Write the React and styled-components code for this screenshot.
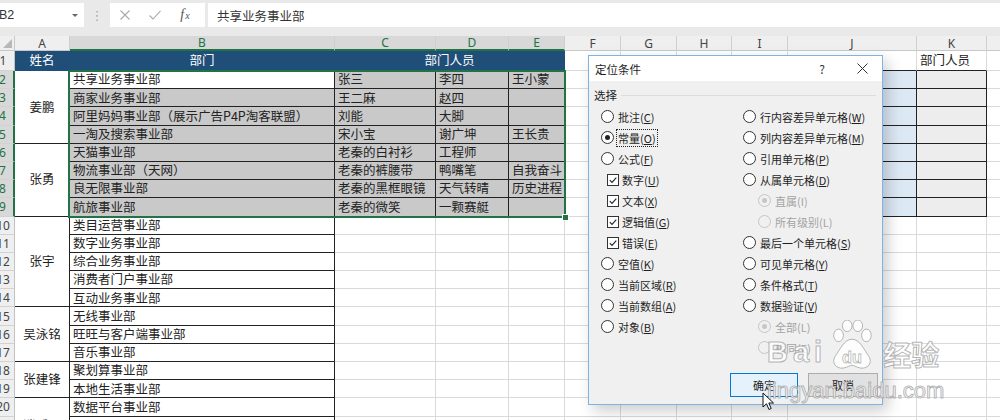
import React from "react";
import styled, { createGlobalStyle } from "styled-components";

const GlobalStyle = createGlobalStyle`
  body {
    margin: 0;
    overflow: hidden;
    background: #fff;
    font-family: "Noto Sans CJK SC", "Noto Sans", sans-serif;
  }
`;

const NAVY = "#1f4e78";
const GREEN = "#217346";
const GRID = "#dadada";
const SEL_FILL = "#c9c9c9";

const COLS = ["A", "B", "C", "D", "E", "F", "G", "H", "I", "J", "K", "L"];
const WIDTHS = [55, 265, 101, 73, 56, 56, 56, 55, 56, 129, 70, 73];

const depts = {
  2: "共享业务事业部",
  3: "商家业务事业部",
  4: "阿里妈妈事业部（展示广告P4P淘客联盟）",
  5: "一淘及搜索事业部",
  6: "天猫事业部",
  7: "物流事业部（天网）",
  8: "良无限事业部",
  9: "航旅事业部",
  10: "类目运营事业部",
  11: "数字业务事业部",
  12: "综合业务事业部",
  13: "消费者门户事业部",
  14: "互动业务事业部",
  15: "无线事业部",
  16: "旺旺与客户端事业部",
  17: "音乐事业部",
  18: "聚划算事业部",
  19: "本地生活事业部",
  20: "数据平台事业部",
};

const people = {
  2: ["张三", "李四", "王小蒙"],
  3: ["王二麻", "赵四", ""],
  4: ["刘能", "大脚", ""],
  5: ["宋小宝", "谢广坤", "王长贵"],
  6: ["老秦的白衬衫", "工程师", ""],
  7: ["老秦的裤腰带", "鸭嘴笔", "自我奋斗"],
  8: ["老秦的黑框眼镜", "天气转晴", "历史进程"],
  9: ["老秦的微笑", "一颗赛艇", ""],
};

const groups = [
  { name: "姜鹏", from: 2, to: 5 },
  { name: "张勇", from: 6, to: 9 },
  { name: "张宇", from: 10, to: 14 },
  { name: "吴泳铭", from: 15, to: 17 },
  { name: "张建锋", from: 18, to: 19 },
  { name: "逍遥子", from: 20, to: 22 },
];

const options = [
  [{ t: "批注", k: "C" }, { t: "行内容差异单元格", k: "W" }],
  [{ t: "常量", k: "O", on: true, focus: true }, { t: "列内容差异单元格", k: "M" }],
  [{ t: "公式", k: "F" }, { t: "引用单元格", k: "P" }],
  [{ t: "数字", k: "U", box: true }, { t: "从属单元格", k: "D" }],
  [{ t: "文本", k: "X", box: true }, { t: "直属", k: "I", off: true, on: true, sub: true }],
  [{ t: "逻辑值", k: "G", box: true }, { t: "所有级别", k: "L", off: true, sub: true }],
  [{ t: "错误", k: "E", box: true }, { t: "最后一个单元格", k: "S" }],
  [{ t: "空值", k: "K" }, { t: "可见单元格", k: "Y" }],
  [{ t: "当前区域", k: "R" }, { t: "条件格式", k: "T" }],
  [{ t: "当前数组", k: "A" }, { t: "数据验证", k: "V" }],
  [{ t: "对象", k: "B" }, { t: "全部", k: "L", off: true, on: true, sub: true }],
  [null, { t: "相同", k: "E", off: true, sub: true }],
];

const Page = styled.div`
  position: relative;
  width: 1000px;
  height: 420px;
  overflow: hidden;
  background: #fff;
`;

/* ---------- formula bar ---------- */

const FormulaBar = styled.div`
  height: 36px;
  box-sizing: border-box;
  padding: 3px 0 9px;
  background: #e9e9e9;
  display: flex;
`;

const NameBox = styled.div`
  width: 84px;
  background: #fff;
  display: flex;
  align-items: center;
  justify-content: space-between;
  padding-right: 6px;
  box-sizing: border-box;
  font: 12.5px "Liberation Sans", sans-serif;
  color: #333;
`;

const NameText = styled.span`
  margin-left: -1px;
`;

const Caret = styled.span`
  width: 0;
  height: 0;
  border-left: 3px solid transparent;
  border-right: 3px solid transparent;
  border-top: 3px solid #666;
`;

const Grip = styled.div`
  width: 26px;
  display: flex;
  align-items: center;
  justify-content: center;
  color: #a8a8a8;
  font: 13px "DejaVu Sans", sans-serif;
`;

const ToolBox = styled.div`
  width: 95px;
  background: #fff;
  display: flex;
`;

const ToolSlot = styled.div`
  width: 30px;
  display: flex;
  align-items: center;
  justify-content: center;
`;

const Fx = styled.span`
  font: italic 14px "Liberation Serif", serif;
  color: #555;
  small {
    font-size: 10px;
    margin-left: 1px;
  }
`;

const FormulaInput = styled.div`
  flex: 1;
  margin-left: 3px;
  background: #fff;
  display: flex;
  align-items: center;
  padding-left: 9px;
  font-size: 12.5px;
  color: #333;
`;

/* ---------- sheet ---------- */

const Sheet = styled.div`
  display: grid;
  grid-template-columns: 23px ${WIDTHS.map((w) => `${w}px`).join(" ")};
  grid-template-rows: 15px 20px repeat(21, 18.2px);
  margin-left: -8px;
`;

const Corner = styled.div`
  grid-row: 1;
  grid-column: 1;
  background: #efefef;
  border-right: 1px solid #c8c8c8;
  border-bottom: 1px solid #c8c8c8;
  box-sizing: border-box;
  display: flex;
  align-items: flex-end;
  justify-content: flex-end;
  padding: 0 2px 2px 0;
  &::after {
    content: "";
    border-left: 9px solid transparent;
    border-bottom: 9px solid #b8b8b8;
  }
`;

const ColHead = styled.div`
  grid-row: 1;
  grid-column: ${(p) => p.$col};
  background: ${(p) => (p.$sel ? "#d8d8d8" : "#efefef")};
  color: ${(p) => (p.$sel ? GREEN : "#444")};
  border-right: 1px solid #cfcfcf;
  border-bottom: ${(p) => (p.$sel ? `2px solid ${GREEN}` : "1px solid #c8c8c8")};
  box-sizing: border-box;
  display: flex;
  align-items: center;
  justify-content: center;
  font: 12px "Noto Sans", sans-serif;
`;

const RowHead = styled.div`
  grid-row: ${(p) => p.$row};
  grid-column: 1;
  background: ${(p) => (p.$sel ? "#d8d8d8" : "#efefef")};
  color: ${(p) => (p.$sel ? GREEN : "#444")};
  border-bottom: 1px solid #d2d2d2;
  border-right: ${(p) => (p.$sel ? `2px solid ${GREEN}` : "1px solid #c2c2c2")};
  box-sizing: border-box;
  display: flex;
  align-items: center;
  justify-content: center;
  font: 12px "Noto Sans", sans-serif;
`;

const Cell = styled.div`
  grid-row: ${(p) => p.$row} / span ${(p) => p.$rs || 1};
  grid-column: ${(p) => p.$col} / span ${(p) => p.$cs || 1};
  box-sizing: border-box;
  border-right: 1px solid ${(p) => p.$br || GRID};
  border-bottom: 1px solid ${(p) => p.$bb || p.$br || GRID};
  background: ${(p) => p.$fill || "#fff"};
  color: ${(p) => p.$color || "#222"};
  font-size: 12.5px;
  line-height: 1;
  display: flex;
  align-items: center;
  justify-content: ${(p) => (p.$center ? "center" : "flex-start")};
  padding-left: ${(p) => (p.$center ? 0 : 3)}px;
  white-space: nowrap;
  overflow: hidden;
`;

const Selection = styled.div`
  grid-row: 3 / span 8;
  grid-column: 3 / span 4;
  margin: -1px -1px -1px -2px;
  border: 2px solid ${GREEN};
  position: relative;
  z-index: 2;
  pointer-events: none;
`;

const Handle = styled.span`
  position: absolute;
  right: -5px;
  bottom: -5px;
  width: 5px;
  height: 5px;
  background: ${GREEN};
  border: 1px solid #fff;
`;

/* ---------- dialog ---------- */

const Dialog = styled.div`
  position: absolute;
  left: 588px;
  top: 55px;
  width: 295px;
  height: 350px;
  box-sizing: border-box;
  border: 1px solid #7fb3e6;
  background: #f0f0f0;
  box-shadow: 5px 6px 14px rgba(0, 0, 0, 0.2);
  display: flex;
  flex-direction: column;
  font-size: 11px;
  color: #1e1e1e;
  z-index: 5;
`;

const TitleBar = styled.div`
  height: 25px;
  background: #fff;
  display: flex;
  align-items: center;
  padding-left: 6px;
  font-size: 11.5px;
`;

const TitleText = styled.span`
  flex: 1;
`;

const TitleButton = styled.span`
  width: 40px;
  display: flex;
  justify-content: center;
  font-size: 12px;
  color: #333;
`;

const GroupLabel = styled.div`
  height: 20px;
  margin-top: 4px;
  padding: 0 6px 0 5px;
  display: flex;
  align-items: center;
  gap: 4px;
  font-size: 11.5px;
  &::after {
    content: "";
    flex: 1;
    height: 1px;
    background: #dcdcdc;
  }
`;

const Options = styled.div`
  display: grid;
  grid-template-columns: 142px 1fr;
  grid-auto-rows: 21px;
  padding-left: 12px;
  margin-top: 1px;
`;

const Option = styled.div`
  display: flex;
  align-items: center;
  gap: ${(p) => (p.$box ? 2 : 3)}px;
  padding-left: ${(p) => p.$indent}px;
  color: ${(p) => (p.$off ? "#a3a3a3" : "#1e1e1e")};
  white-space: nowrap;
`;

const Radio = styled.span`
  width: 13px;
  height: 13px;
  box-sizing: border-box;
  border-radius: 50%;
  border: 1px solid ${(p) => (p.$off ? "#c6c6c6" : "#333")};
  background: ${(p) => (p.$off ? "#f0f0f0" : "#fff")};
  display: flex;
  align-items: center;
  justify-content: center;
  &::after {
    content: "";
    display: ${(p) => (p.$on ? "block" : "none")};
    width: 5px;
    height: 5px;
    border-radius: 50%;
    background: ${(p) => (p.$off ? "#c6c6c6" : "#222")};
  }
`;

const Box = styled.span`
  width: 12px;
  height: 12px;
  box-sizing: border-box;
  border: 1px solid #333;
  background: #fff;
  display: flex;
`;

const Label = styled.span`
  padding: 0 1px;
  outline: ${(p) => (p.$focus ? "1px dotted #222" : "none")};
  u {
    text-decoration-thickness: 1px;
    text-underline-offset: 1px;
  }
`;

const ButtonRow = styled.div`
  margin-top: auto;
  padding: 0 4px 7px 0;
  display: flex;
  justify-content: flex-end;
  gap: 10px;
`;

const Button = styled.div`
  width: ${(p) => p.$w}px;
  height: 24px;
  box-sizing: border-box;
  display: flex;
  align-items: center;
  justify-content: center;
  background: ${(p) => (p.$primary ? "#e5f1fb" : "#e1e1e1")};
  border: 1px solid ${(p) => (p.$primary ? "#0078d7" : "#adadad")};
  font-size: 11px;
`;

/* ---------- overlays ---------- */

const Watermark = styled.div`
  position: absolute;
  left: 767px;
  top: 320px;
  z-index: 8;
  pointer-events: none;
  color: rgba(255, 255, 255, 0.85);
  -webkit-text-stroke: 1px rgba(150, 150, 150, 0.7);
  font-family: "Liberation Sans", sans-serif;
`;

const MarkTop = styled.div`
  display: flex;
  align-items: flex-end;
  height: 50px;
`;

const MarkBai = styled.span`
  font-size: 29px;
  font-weight: bold;
  letter-spacing: 5px;
  line-height: 1;
  margin-bottom: 3px;
`;

const MarkJy = styled.span`
  font-family: "Noto Sans CJK SC", sans-serif;
  font-size: 28px;
  font-weight: bold;
  line-height: 1;
  margin: 0 0 2px 6px;
`;

const MarkUrl = styled.div`
  font-size: 22px;
  line-height: 1;
  margin-top: 10px;
`;

const Cursor = styled.svg`
  position: absolute;
  left: 762px;
  top: 392px;
  z-index: 9;
`;

/* ---------- pieces ---------- */

function Choice({ item }) {
  if (!item) return <div />;
  const indent = item.box ? 6 : item.sub ? 15 : 0;
  return (
    <Option $indent={indent} $off={item.off} $box={item.box}>
      {item.box ? (
        <Box>
          <svg width="10" height="10" viewBox="0 0 10 10">
            <path d="M1.8 5.2 L4 7.4 L8.3 2.6" fill="none" stroke="#222" strokeWidth="1.1" />
          </svg>
        </Box>
      ) : (
        <Radio $on={item.on} $off={item.off} />
      )}
      <Label $focus={item.focus}>
        {item.t}(
        {item.off ? item.k : <u>{item.k}</u>})
      </Label>
    </Option>
  );
}

function SheetGrid() {
  const cells = [];

  cells.push(<Corner key="corner" />);
  COLS.forEach((c, i) => {
    cells.push(
      <ColHead key={`h${c}`} $col={i + 2} $sel={i >= 1 && i <= 4}>
        {c}
      </ColHead>
    );
  });

  for (let r = 1; r <= 22; r++) {
    cells.push(
      <RowHead key={`r${r}`} $row={r + 1} $sel={r >= 2 && r <= 9}>
        {r}
      </RowHead>
    );
  }

  // row 1: header band
  cells.push(
    <Cell key="a1" $row={2} $col={2} $fill={NAVY} $br={NAVY} $color="#fff" $center>
      姓名
    </Cell>,
    <Cell key="b1" $row={2} $col={3} $fill={NAVY} $br={NAVY} $color="#fff" $center>
      部门
    </Cell>,
    <Cell key="c1" $row={2} $col={4} $cs={3} $fill={NAVY} $br={NAVY} $color="#fff" $center>
      部门人员
    </Cell>
  );
  for (let i = 5; i < COLS.length; i++) {
    const edge = i === 9 || i === 10;
    cells.push(
      <Cell key={`1-${i}`} $row={2} $col={i + 2} $bb={edge ? "#222" : undefined}>
        {i === 10 ? "部门人员" : ""}
      </Cell>
    );
  }

  // column A merged names
  groups.forEach((g) => {
    cells.push(
      <Cell
        key={`g${g.from}`}
        $row={g.from + 1}
        $rs={g.to - g.from + 1}
        $col={2}
        $br="#222"
        $center
      >
        {g.name}
      </Cell>
    );
  });

  for (let r = 2; r <= 22; r++) {
    const row = r + 1;
    const inData = r <= 9;
    cells.push(
      <Cell
        key={`b${r}`}
        $row={row}
        $col={3}
        $br="#222"
        $fill={r >= 3 && r <= 9 ? SEL_FILL : "#fff"}
      >
        {depts[r] || ""}
      </Cell>
    );
    for (let i = 2; i < COLS.length; i++) {
      let props = {};
      let text = "";
      if (inData && i <= 4) {
        props = { $br: "#222", $fill: SEL_FILL };
        text = people[r][i - 2];
      } else if (inData && i === 8) {
        props = { $br: "#222" };
      } else if (inData && i === 9) {
        props = { $br: "#222", $fill: "#dce9f5" };
      } else if (inData && i === 10) {
        props = { $br: "#222", $fill: "#ededed" };
      }
      cells.push(
        <Cell key={`${COLS[i]}${r}`} $row={row} $col={i + 2} {...props}>
          {text}
        </Cell>
      );
    }
  }

  return (
    <Sheet>
      {cells}
      <Selection>
        <Handle />
      </Selection>
    </Sheet>
  );
}

export default function App() {
  return (
    <Page>
      <GlobalStyle />
      <FormulaBar>
        <NameBox>
          <NameText>B2</NameText>
          <Caret />
        </NameBox>
        <Grip>⋮</Grip>
        <ToolBox>
          <ToolSlot>
            <svg width="12" height="12" viewBox="0 0 12 12">
              <path d="M1.5 1.5 L10.5 10.5 M10.5 1.5 L1.5 10.5" stroke="#a9a9a9" strokeWidth="1.1" />
            </svg>
          </ToolSlot>
          <ToolSlot>
            <svg width="14" height="12" viewBox="0 0 14 12">
              <path d="M1.5 6.5 L5 10 L12.5 1.8" fill="none" stroke="#a9a9a9" strokeWidth="1.1" />
            </svg>
          </ToolSlot>
          <ToolSlot>
            <Fx>
              f<small>x</small>
            </Fx>
          </ToolSlot>
        </ToolBox>
        <FormulaInput>共享业务事业部</FormulaInput>
      </FormulaBar>

      <SheetGrid />

      <Dialog>
        <TitleBar>
          <TitleText>定位条件</TitleText>
          <TitleButton>?</TitleButton>
          <TitleButton>
            <svg width="11" height="11" viewBox="0 0 11 11">
              <path d="M0.5 0.5 L10.5 10.5 M10.5 0.5 L0.5 10.5" stroke="#333" strokeWidth="1" />
            </svg>
          </TitleButton>
        </TitleBar>
        <GroupLabel>选择</GroupLabel>
        <Options>
          {options.map(([l, r], i) => (
            <React.Fragment key={i}>
              <Choice item={l} />
              <Choice item={r} />
            </React.Fragment>
          ))}
        </Options>
        <ButtonRow>
          <Button $w={68} $primary>
            确定
          </Button>
          <Button $w={70}>取消</Button>
        </ButtonRow>
      </Dialog>

      <Watermark>
        <MarkTop>
          <MarkBai>Bai</MarkBai>
          <svg width="50" height="50" viewBox="0 0 46 52">
            <g fill="rgba(255,255,255,0.85)" stroke="rgba(150,150,150,0.7)" strokeWidth="1">
              <ellipse cx="9" cy="16" rx="5" ry="6.5" />
              <ellipse cx="18" cy="6" rx="5" ry="6" />
              <ellipse cx="29" cy="6" rx="5" ry="6" />
              <ellipse cx="38" cy="16" rx="5" ry="6.5" />
              <path d="M23 20 C15 20 11 30 6 37 C1 44 6 51 14 50 C19 49 21 47 23 47 C25 47 27 49 32 50 C40 51 45 44 40 37 C35 30 31 20 23 20 Z" />
            </g>
            <text
              x="23"
              y="45"
              textAnchor="middle"
              fontFamily="Liberation Sans, sans-serif"
              fontSize="17"
              fontWeight="bold"
              fill="#fff"
              stroke="rgba(150,150,150,0.7)"
              strokeWidth="0.8"
            >
              du
            </text>
          </svg>
          <MarkJy>经验</MarkJy>
        </MarkTop>
        <MarkUrl>jingyan.baidu.com</MarkUrl>
      </Watermark>

      <Cursor width="13" height="19" viewBox="0 0 13 19">
        <path
          d="M1 1 L1 15 L4.5 11.8 L7 17.5 L9.2 16.5 L6.8 11 L11.5 11 Z"
          fill="#fff"
          stroke="#111"
          strokeWidth="1"
          strokeLinejoin="round"
        />
      </Cursor>
    </Page>
  );
}
